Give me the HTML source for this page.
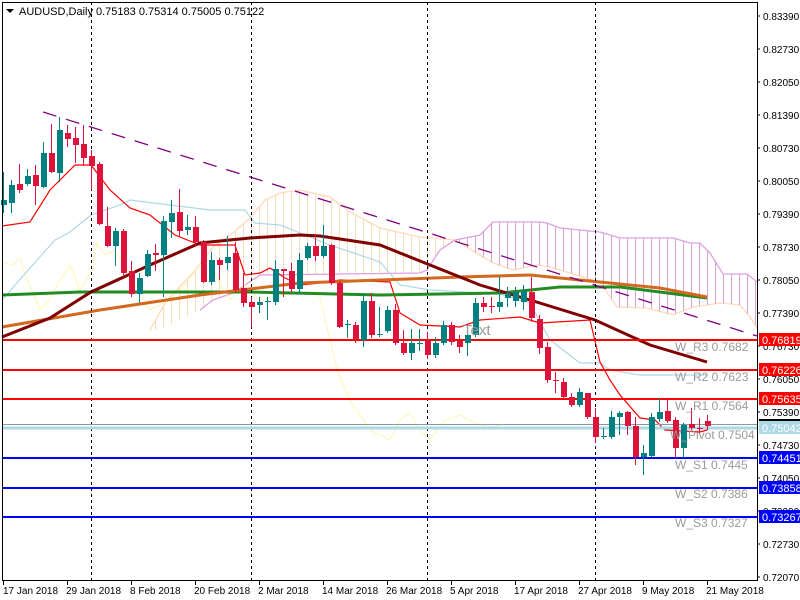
<!DOCTYPE html>
<html><head><meta charset="utf-8"><style>
html,body{margin:0;padding:0;background:#fff;width:800px;height:600px;overflow:hidden}
svg{display:block;font-family:"Liberation Sans",sans-serif}
</style></head><body>
<svg width="800" height="600" xmlns="http://www.w3.org/2000/svg">
<defs>
<pattern id="hp" patternUnits="userSpaceOnUse" width="8" height="10" x="0" y="0"><line x1="3.5" y1="0" x2="3.5" y2="10" stroke="#ffdab9" stroke-width="1"/></pattern>
<pattern id="hm" patternUnits="userSpaceOnUse" width="8" height="10" x="0" y="0"><line x1="3.5" y1="0" x2="3.5" y2="10" stroke="#dda0dd" stroke-width="1"/></pattern>
</defs>
<rect width="800" height="600" fill="#fff"/>
<!-- clouds -->
<polygon fill="url(#hp)" points="150,330 167,300 193,273 213,247 233,233 250,218 265,200 280,193 300,190 330,197 350,212 380,228 420,237 455,240 440,250 427,270 420,273 260,275 233,293 213,300 200,310 160,330"/>
<polyline fill="none" stroke="#ffdab9" stroke-width="1.3" points="150,330 167,300 193,273 213,247 233,233 250,218 265,200 280,193 300,190 330,197 350,212 380,228 420,237 455,240 493,263 513,270 537,265 550,267 583,277 600,282 617,307 647,308 673,315 693,307 720,303 740,305 750,317 757,328"/>
<polygon fill="url(#hm)" points="455,240 480,235 493,222 540,222 547,223 560,228 600,232 620,238 673,238 690,243 700,243 710,253 723,274 747,274 757,282 757,328 750,317 740,305 720,303 693,307 673,315 647,308 617,307 600,282 583,277 550,267 537,265 513,270 493,263"/>
<polyline fill="none" stroke="#dda0dd" stroke-width="1.3" points="200,310 213,300 233,293 260,275 420,273 427,270 440,250 455,240 480,235 493,222 540,222 547,223 560,228 600,232 620,238 673,238 690,243 700,243 710,253 723,274 747,274 757,282"/>
<!-- chikou -->
<polyline fill="none" stroke="#fff5b0" stroke-width="1" points="2,262 12,265 20,258 25,275 40,310 50,300 60,280 70,265 80,290 92,270 97,243 105,255 115,250 130,275 150,310 170,300 185,285 200,265 210,260 220,285 230,300 245,285 260,300 275,297 295,293 313,292 320,297 337,370 350,400 370,430 390,440 400,420 410,413 420,430 430,440 445,420 460,415 475,423 490,428 500,425"/>
<!-- kijun -->
<polyline fill="none" stroke="#add8e6" stroke-width="1.2" points="2,300 30,268 55,240 70,232 91,215 120,205 130,200 210,210 245,210 255,223 280,225 330,245 380,262 400,285 430,290 500,294 530,303 550,340 580,363 600,363 610,370 640,375 707,375"/>
<!-- tenkan -->
<polyline fill="none" stroke="#ff0000" stroke-width="1.2" points="2,226 30,222 50,190 75,165 91,165 110,190 130,208 150,215 175,235 200,245 235,245 245,275 260,273 270,268 285,278 300,285 320,283 340,280 390,282 400,313 420,325 460,327 480,320 520,317 530,320 540,323 590,320 600,362 610,380 620,395 640,418 655,420 665,430 700,432 707,430"/>
<!-- MAs -->
<polyline fill="none" stroke="#228b22" stroke-width="3" points="2,295 80,292 150,292 250,292 380,295 500,293 560,287 620,287 707,298"/>
<polyline fill="none" stroke="#d2691e" stroke-width="3" points="2,327 100,310 200,295 300,283 380,280 460,277 530,275 600,282 660,288 707,297"/>
<polyline fill="none" stroke="#800000" stroke-width="3" points="2,337 50,318 91,292 150,265 200,243 250,238 300,235 320,236 380,245 430,265 480,285 530,300 595,320 650,345 707,362"/>
<!-- trendline -->
<line x1="43" y1="112" x2="757" y2="336" stroke="#800080" stroke-width="1.3" stroke-dasharray="14,10"/>
<!-- vertical dashed -->
<g stroke="#000" stroke-width="1" stroke-dasharray="3,3">
<line x1="91.5" y1="2" x2="91.5" y2="580"/><line x1="251.5" y1="2" x2="251.5" y2="580"/><line x1="427.5" y1="2" x2="427.5" y2="580"/><line x1="595.5" y1="2" x2="595.5" y2="580"/>
</g>
<!-- horizontal levels -->
<g stroke-width="2">
<line x1="2" y1="340" x2="757" y2="340" stroke="#ff0000"/>
<line x1="2" y1="370" x2="757" y2="370" stroke="#ff0000"/>
<line x1="2" y1="399" x2="757" y2="399" stroke="#ff0000"/>
<line x1="2" y1="458" x2="757" y2="458" stroke="#0000ff"/>
<line x1="2" y1="488" x2="757" y2="488" stroke="#0000ff"/>
<line x1="2" y1="517" x2="757" y2="517" stroke="#0000ff"/>
<line x1="2" y1="428" x2="757" y2="428" stroke="#add8e6" stroke-width="3"/>
</g>
<line x1="2" y1="424.5" x2="757" y2="424.5" stroke="#8899a6" stroke-width="1"/>
<!-- candles -->
<g id="c"></g>
<path stroke="#008080" stroke-width="1" fill="none" d="M3.5 172V213M11.5 180V213M27.5 169V186M43.5 142V188M59.5 117V182M115.5 228V266M139.5 273V303M147.5 250V277M163.5 216V297M171.5 200V238M187.5 215V235M211.5 252V285M227.5 236V270M259.5 297V313M267.5 297V320M275.5 260V305M299.5 253V294M307.5 243V260M323.5 225V258M347.5 320V338M363.5 293V347M379.5 307V337M387.5 306V333M411.5 329V360M419.5 329V351M435.5 337V358M443.5 321V345M467.5 332V356M475.5 298V337M499.5 277V312M507.5 287V307M515.5 287V307M523.5 285V310M579.5 388V407M603.5 428V439M611.5 411V439M619.5 411V435M643.5 445V475M651.5 413V457M659.5 398V422M683.5 423V458"/>
<path stroke="#dc143c" stroke-width="1" fill="none" d="M19.5 164V193M35.5 165V205M51.5 124V173M67.5 125V147M75.5 127V163M83.5 125V166M91.5 150V190M99.5 162V225M107.5 207V247M123.5 229V275M131.5 261V297M155.5 244V271M179.5 189V237M195.5 216V246M203.5 240V283M219.5 258V280M235.5 242V293M243.5 273V307M251.5 297V327M283.5 269V297M291.5 263V292M315.5 235V261M331.5 244V285M339.5 281V328M355.5 322V343M371.5 293V338M395.5 304V345M403.5 330V355M427.5 332V359M451.5 322V345M459.5 335V353M483.5 297V312M491.5 297V313M531.5 277V322M539.5 315V354M547.5 342V383M555.5 372V393M563.5 378V398M571.5 393V407M587.5 393V419M595.5 408V443M627.5 411V435M635.5 417V465M667.5 399V423M675.5 417V458M691.5 408V430M699.5 418V432M707.5 415V430"/>
<g fill="#008080">
<rect x="1" y="200" width="6" height="5"/><rect x="9" y="185" width="6" height="18"/><rect x="25" y="176" width="6" height="8"/><rect x="41" y="153" width="6" height="34"/><rect x="57" y="130" width="6" height="43"/><rect x="113" y="231" width="6" height="15"/><rect x="137" y="278" width="6" height="16"/><rect x="145" y="254" width="6" height="22"/><rect x="161" y="221" width="6" height="34"/><rect x="169" y="213" width="6" height="9"/><rect x="185" y="227" width="6" height="3"/><rect x="209" y="260" width="6" height="22"/><rect x="225" y="257" width="6" height="6"/><rect x="257" y="302" width="6" height="3"/><rect x="265" y="301" width="6" height="1"/><rect x="273" y="269" width="6" height="33"/><rect x="297" y="260" width="6" height="29"/><rect x="305" y="246" width="6" height="12"/><rect x="321" y="246" width="6" height="10"/><rect x="345" y="324" width="6" height="1"/><rect x="361" y="301" width="6" height="39"/><rect x="377" y="334" width="6" height="1"/><rect x="385" y="310" width="6" height="21"/><rect x="409" y="343" width="6" height="10"/><rect x="417" y="343" width="6" height="1"/><rect x="433" y="343" width="6" height="12"/><rect x="441" y="325" width="6" height="18"/><rect x="465" y="335" width="6" height="8"/><rect x="473" y="303" width="6" height="32"/><rect x="497" y="302" width="6" height="5"/><rect x="505" y="293" width="6" height="5"/><rect x="513" y="292" width="6" height="9"/><rect x="521" y="291" width="6" height="11"/><rect x="577" y="392" width="6" height="13"/><rect x="601" y="436" width="6" height="1"/><rect x="609" y="417" width="6" height="20"/><rect x="617" y="413" width="6" height="4"/><rect x="641" y="453" width="6" height="4"/><rect x="649" y="417" width="6" height="39"/><rect x="657" y="412" width="6" height="7"/><rect x="681" y="425" width="6" height="23"/>
</g>
<g fill="#dc143c">
<rect x="17" y="184" width="6" height="6"/><rect x="33" y="175" width="6" height="11"/><rect x="49" y="153" width="6" height="19"/><rect x="65" y="133" width="6" height="6"/><rect x="73" y="138" width="6" height="7"/><rect x="81" y="144" width="6" height="14"/><rect x="89" y="156" width="6" height="10"/><rect x="97" y="164" width="6" height="60"/><rect x="105" y="226" width="6" height="20"/><rect x="121" y="231" width="6" height="42"/><rect x="129" y="271" width="6" height="23"/><rect x="153" y="253" width="6" height="2"/><rect x="177" y="212" width="6" height="19"/><rect x="193" y="227" width="6" height="15"/><rect x="201" y="242" width="6" height="40"/><rect x="217" y="260" width="6" height="5"/><rect x="233" y="253" width="6" height="37"/><rect x="241" y="288" width="6" height="15"/><rect x="249" y="302" width="6" height="5"/><rect x="281" y="269" width="6" height="2"/><rect x="289" y="271" width="6" height="18"/><rect x="313" y="246" width="6" height="10"/><rect x="329" y="245" width="6" height="38"/><rect x="337" y="283" width="6" height="44"/><rect x="353" y="325" width="6" height="14"/><rect x="369" y="301" width="6" height="34"/><rect x="393" y="310" width="6" height="33"/><rect x="401" y="343" width="6" height="10"/><rect x="425" y="340" width="6" height="15"/><rect x="449" y="325" width="6" height="17"/><rect x="457" y="341" width="6" height="6"/><rect x="481" y="303" width="6" height="4"/><rect x="489" y="306" width="6" height="1"/><rect x="529" y="292" width="6" height="26"/><rect x="537" y="319" width="6" height="29"/><rect x="545" y="347" width="6" height="33"/><rect x="553" y="380" width="6" height="1"/><rect x="561" y="382" width="6" height="15"/><rect x="569" y="397" width="6" height="8"/><rect x="585" y="393" width="6" height="24"/><rect x="593" y="417" width="6" height="20"/><rect x="625" y="412" width="6" height="14"/><rect x="633" y="426" width="6" height="31"/><rect x="665" y="411" width="6" height="10"/><rect x="673" y="420" width="6" height="28"/><rect x="689" y="424" width="6" height="4"/><rect x="697" y="428" width="6" height="1"/><rect x="705" y="421" width="6" height="5"/>
</g>
<!-- labels on chart -->
<g fill="#9a9a9a" font-size="12">
<text x="675" y="351">W_R3 0.7682</text>
<text x="675" y="381">W_R2 0.7623</text>
<text x="675" y="410">W_R1 0.7564</text>
<text x="670" y="439">W_Pivot 0.7504</text>
<text x="675" y="469">W_S1 0.7445</text>
<text x="675" y="498">W_S2 0.7386</text>
<text x="675" y="527">W_S3 0.7327</text>
</g>
<text x="463" y="335" fill="#9a9a9a" font-size="15">Text</text>
<!-- header -->
<path d="M6 9h8l-4 4z" fill="#000"/>
<text x="19" y="15" font-size="11" fill="#000">AUDUSD,Daily  0.75183 0.75314 0.75005 0.75122</text>
<!-- frame -->
<rect x="2.5" y="2.5" width="755" height="578" fill="none" stroke="#000" stroke-width="1"/>
<!-- price axis -->
<g font-size="10" fill="#000">
<text x="763" y="20">0.83390</text><text x="763" y="53">0.82730</text><text x="763" y="86">0.82050</text><text x="763" y="119">0.81390</text><text x="763" y="152">0.80730</text><text x="763" y="185">0.80050</text><text x="763" y="218">0.79390</text><text x="763" y="251">0.78730</text><text x="763" y="284">0.78050</text><text x="763" y="317">0.77390</text><text x="763" y="350">0.76730</text><text x="763" y="383">0.76050</text><text x="763" y="416">0.75390</text><text x="763" y="449">0.74730</text><text x="763" y="482">0.74050</text><text x="763" y="515">0.73390</text><text x="763" y="548">0.72730</text><text x="763" y="581">0.72070</text>
</g>
<path stroke="#000" d="M757 16h3M757 49h3M757 82h3M757 115h3M757 148h3M757 181h3M757 214h3M757 247h3M757 280h3M757 313h3M757 346h3M757 379h3M757 412h3M757 445h3M757 478h3M757 511h3M757 544h3M757 577h3"/>
<rect x="759" y="419" width="41" height="5" fill="#000"/>
<g font-size="11" fill="#fff">
<rect x="759" y="333" width="41" height="13" fill="#ff0000"/><text x="762" y="344">0.76819</text>
<rect x="759" y="363" width="41" height="13" fill="#ff0000"/><text x="762" y="374">0.76226</text>
<rect x="759" y="392" width="41" height="13" fill="#ff0000"/><text x="762" y="403">0.75635</text>
<rect x="759" y="421" width="41" height="13" fill="#add8e6"/><text x="762" y="432">0.75042</text>
<rect x="759" y="451" width="41" height="13" fill="#0000ff"/><text x="762" y="462">0.74451</text>
<rect x="759" y="481" width="41" height="13" fill="#0000ff"/><text x="762" y="492">0.73858</text>
<rect x="759" y="510" width="41" height="13" fill="#0000ff"/><text x="762" y="521">0.73267</text>
</g>
<!-- date axis -->
<path stroke="#000" d="M3.5 581v4M67.5 581v4M131.5 581v4M195.5 581v4M259.5 581v4M323.5 581v4M387.5 581v4M451.5 581v4M515.5 581v4M579.5 581v4M643.5 581v4M707.5 581v4"/>
<g font-size="10" fill="#000">
<text x="3" y="594">17 Jan 2018</text><text x="66" y="594">29 Jan 2018</text><text x="130" y="594">8 Feb 2018</text><text x="194" y="594">20 Feb 2018</text><text x="258" y="594">2 Mar 2018</text><text x="322" y="594">14 Mar 2018</text><text x="386" y="594">26 Mar 2018</text><text x="450" y="594">5 Apr 2018</text><text x="514" y="594">17 Apr 2018</text><text x="578" y="594">27 Apr 2018</text><text x="642" y="594">9 May 2018</text><text x="706" y="594">21 May 2018</text>
</g>
</svg>
</body></html>
